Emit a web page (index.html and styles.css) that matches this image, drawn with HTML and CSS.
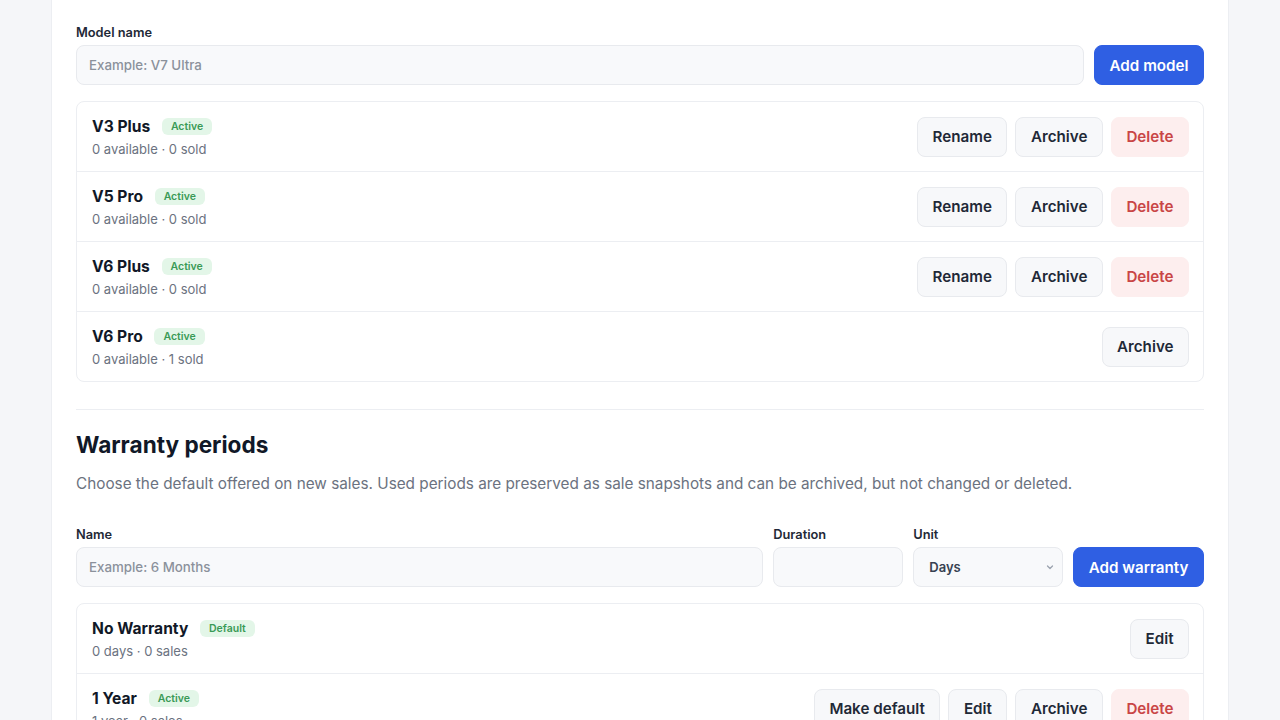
FILE: index.html
```html
<!doctype html>
<html lang="en">
  <head>
    <meta charset="utf-8"/>
    <title>Catalog settings</title>
    <link rel="stylesheet" href="styles.css">
  </head>
  <body>
    <div class="page">
      <div class="card">
        <!-- models -->
        <div class="field">
          <label for="model_name" class="lbl">Model name</label>
          <div class="inline-form">
            <input type="text" id="model_name" class="txt" placeholder="Example: V7 Ultra"/>
            <button class="btn btn-primary">Add model</button>
          </div>
        </div>

        <ul class="item-list">
          <li class="item">
            <div class="item-info">
              <div class="item-title">V3 Plus <span class="badge">Active</span></div>
              <div class="item-meta">0 available · 0 sold</div>
            </div>
            <div class="item-actions">
              <button class="btn">Rename</button>
              <button class="btn">Archive</button>
              <button class="btn btn-danger">Delete</button>
            </div>
          </li>
          <li class="item">
            <div class="item-info">
              <div class="item-title">V5 Pro <span class="badge">Active</span></div>
              <div class="item-meta">0 available · 0 sold</div>
            </div>
            <div class="item-actions">
              <button class="btn">Rename</button>
              <button class="btn">Archive</button>
              <button class="btn btn-danger">Delete</button>
            </div>
          </li>
          <li class="item">
            <div class="item-info">
              <div class="item-title">V6 Plus <span class="badge">Active</span></div>
              <div class="item-meta">0 available · 0 sold</div>
            </div>
            <div class="item-actions">
              <button class="btn">Rename</button>
              <button class="btn">Archive</button>
              <button class="btn btn-danger">Delete</button>
            </div>
          </li>
          <li class="item">
            <div class="item-info">
              <div class="item-title">V6 Pro <span class="badge">Active</span></div>
              <div class="item-meta">0 available · 1 sold</div>
            </div>
            <div class="item-actions">
              <button class="btn">Archive</button>
            </div>
          </li>
        </ul>

        <hr class="divider"/>

        <!-- warranty periods -->
        <h2 class="section-title">Warranty periods</h2>
        <p class="section-desc">Choose the default offered on new sales. Used periods are preserved as sale snapshots and can be archived, but not changed or deleted.</p>

        <div class="warranty-form">
          <div class="field">
            <label for="w_name" class="lbl">Name</label>
            <input type="text" id="w_name" class="txt" placeholder="Example: 6 Months"/>
          </div>
          <div class="field">
            <label for="w_duration" class="lbl">Duration</label>
            <input type="text" id="w_duration" class="txt"/>
          </div>
          <div class="field">
            <label for="w_unit" class="lbl">Unit</label>
            <div class="select-wrap">
              <select id="w_unit" class="sel">
                <option>Days</option>
                <option>Months</option>
                <option>Years</option>
              </select>
              <svg class="chev" width="10" height="10" viewBox="0 0 10 10"><path d="M2.5 4 L5 6.5 L7.5 4" fill="none" stroke="#9ca3af" stroke-width="1.3" stroke-linecap="round" stroke-linejoin="round"/></svg>
            </div>
          </div>
          <button class="btn btn-primary">Add warranty</button>
        </div>

        <ul class="item-list">
          <li class="item">
            <div class="item-info">
              <div class="item-title">No Warranty <span class="badge">Default</span></div>
              <div class="item-meta">0 days · 0 sales</div>
            </div>
            <div class="item-actions">
              <button class="btn">Edit</button>
            </div>
          </li>
          <li class="item">
            <div class="item-info">
              <div class="item-title">1 Year <span class="badge">Active</span></div>
              <div class="item-meta">1 year · 0 sales</div>
            </div>
            <div class="item-actions">
              <button class="btn">Make default</button>
              <button class="btn">Edit</button>
              <button class="btn">Archive</button>
              <button class="btn btn-danger">Delete</button>
            </div>
          </li>
          <li class="item">
            <div class="item-info">
              <div class="item-title">6 Months <span class="badge">Active</span></div>
              <div class="item-meta">6 months · 0 sales</div>
            </div>
            <div class="item-actions">
              <button class="btn">Make default</button>
              <button class="btn">Edit</button>
              <button class="btn">Archive</button>
              <button class="btn btn-danger">Delete</button>
            </div>
          </li>
        </ul>
      </div>
    </div>
  </body>
</html>
```

FILE: styles.css
```css
/* base */
body{
  margin: 0;
  font-family: Inter, "Noto Sans", Arial, sans-serif;
  background-color: #f5f6f9;
  color: #111827;
}
.page{
  padding: 0 51px;
}
/* main card */
.card{
  background: #fff;
  border: 1px solid #eceef2;
  border-top: none;
  padding: 25px 24px 40px 24px;
}
.lbl{
  display: block;
  font-size: 12.8px;
  line-height: 16px;
  font-weight: 600;
  color: #1f2937;
  margin-bottom: 4px;
}
.inline-form{
  display: flex;
  gap: 10px;
}
.txt, .sel{
  box-sizing: border-box;
  height: 40px;
  width: 100%;
  border: 1px solid #e8eaee;
  border-radius: 8px;
  background: #f8f9fb;
  padding: 0 12px;
  font-family: inherit;
  font-size: 13.3px;
  font-weight: 500;
  color: #374151;
}
.txt::placeholder{
  color: #8b919b;
}
.select-wrap{
  position: relative;
}
.sel{
  appearance: none;
  -webkit-appearance: none;
  padding-left: 15px;
  font-size: 13px;
  font-weight: 600;
}
.chev{
  position: absolute;
  right: 8px;
  top: 15px;
}
/* buttons */
.btn{
  box-sizing: border-box;
  height: 40px;
  padding: 0 14.5px;
  border: 1px solid #e8eaee;
  border-radius: 8px;
  background: #f7f8fa;
  font-family: inherit;
  font-size: 15.2px;
  font-weight: 600;
  color: #1f2937;
  white-space: nowrap;
}
.btn-primary{
  background: #2f5fe3;
  border-color: #2f5fe3;
  color: #fff;
}
.btn-danger{
  background: #fdeeee;
  border-color: #fdeeee;
  color: #c94545;
}
/* lists */
.item-list{
  list-style: none;
  margin: 16px 0 0 0;
  padding: 0;
  border: 1px solid #eceef2;
  border-radius: 8px;
}
.item{
  display: flex;
  align-items: center;
  justify-content: space-between;
  height: 69px;
  padding: 0 14px 0 15px;
  border-top: 1px solid #eceef2;
}
.item:first-child{
  border-top: none;
}
.item-title{
  font-size: 15.6px;
  line-height: 22px;
  font-weight: 700;
  color: #111827;
}
.badge{
  display: inline-block;
  vertical-align: 2px;
  margin-left: 8px;
  padding: 0 9px;
  line-height: 17px;
  border-radius: 6px;
  background: #e3f6e8;
  color: #3a9a56;
  font-size: 10.5px;
  font-weight: 600;
}
.item-meta{
  margin-top: 2px;
  font-size: 13px;
  line-height: 18px;
  color: #6b7280;
}
.item-actions{
  display: flex;
  gap: 8px;
}
.divider{
  border: none;
  border-top: 1px solid #eceef2;
  margin: 27px 0 0 0;
}
.section-title{
  margin: 20px 0 0 0;
  font-size: 22.6px;
  line-height: 30px;
  font-weight: 700;
  color: #111827;
}
.section-desc{
  margin: 13px 0 0 0;
  font-size: 15.3px;
  line-height: 22px;
  color: #6b7280;
}
.warranty-form{
  display: grid;
  grid-template-columns: 1fr 130px 150px auto;
  gap: 10px;
  align-items: end;
  margin-top: 32px;
}
```
